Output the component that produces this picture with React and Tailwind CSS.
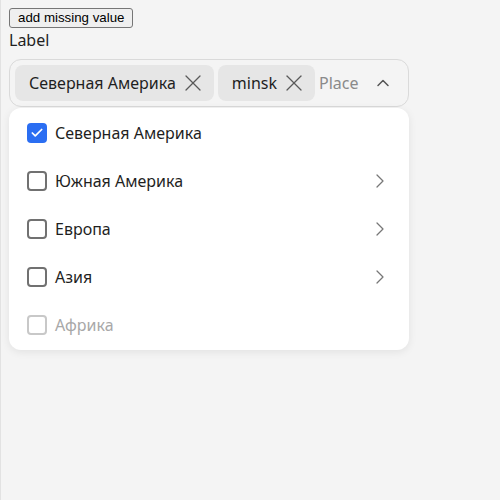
import { Check, ChevronRight, ChevronUp, X } from 'lucide-react';

const options = [
  { label: 'Северная Америка', checked: true },
  { label: 'Южная Америка', children: true },
  { label: 'Европа', children: true },
  { label: 'Азия', children: true },
  { label: 'Африка', disabled: true },
];

function Chip({ label }) {
  return (
    <div className="flex items-center gap-[3px] h-9 pl-[14px] pr-[7px] rounded-lg bg-[#e6e6e6] text-[16px] text-[#1f1f1f]">
      <span>{label}</span>
      <X className="w-7 h-7 text-[#5a5a5a]" strokeWidth={1.1} />
    </div>
  );
}

function Checkbox({ checked, disabled }) {
  if (checked) {
    return (
      <span className="flex items-center justify-center w-5 h-5 rounded-[4px] bg-[#2b6ef2]">
        <Check className="w-[14px] h-[14px] text-white" strokeWidth={3} />
      </span>
    );
  }
  return (
    <span
      className={
        'w-5 h-5 rounded-[4px] border-2 ' +
        (disabled ? 'border-[#c8c8c8]' : 'border-[#717171]')
      }
    />
  );
}

export default function App() {
  return (
    <div
      className="min-h-screen bg-[#f4f4f4] border-l border-[#e2e2e2] pl-2 pt-2"
      style={{ fontFamily: '"Noto Sans", sans-serif' }}
    >
      <button
        className="block h-5 px-[8px] text-[13.3px] leading-none border border-[#767676] rounded-[3px] bg-[#efefef] text-black"
        style={{ fontFamily: '"Liberation Sans", Arial, sans-serif' }}
      >
        add missing value
      </button>
      <div className="text-[16px] leading-6 text-[#1f1f1f]">Label</div>

      <div className="w-[400px] mt-[7px]">
        <div className="flex items-center h-12 px-[5px] gap-1 rounded-xl border border-[#dadada]">
          <Chip label="Северная Америка" />
          <Chip label="minsk" />
          <span className="text-[16px] text-[#8a8a8a]">Place</span>
          <ChevronUp className="w-5 h-5 ml-auto mr-[10px] text-[#555]" strokeWidth={1.8} />
        </div>

        <div className="mt-[1px] bg-white rounded-xl shadow-[0_2px_8px_rgba(0,0,0,0.08)] py-[1px]">
          {options.map((o) => (
            <div key={o.label} className="flex items-center h-12 pl-[18px] pr-[17px] gap-2">
              <Checkbox checked={o.checked} disabled={o.disabled} />
              <span
                className={
                  'text-[16px] ' + (o.disabled ? 'text-[#a8a8a8]' : 'text-[#1f1f1f]')
                }
              >
                {o.label}
              </span>
              {o.children && (
                <ChevronRight className="w-6 h-6 ml-auto text-[#777]" strokeWidth={1.25} />
              )}
            </div>
          ))}
        </div>
      </div>
    </div>
  );
}
